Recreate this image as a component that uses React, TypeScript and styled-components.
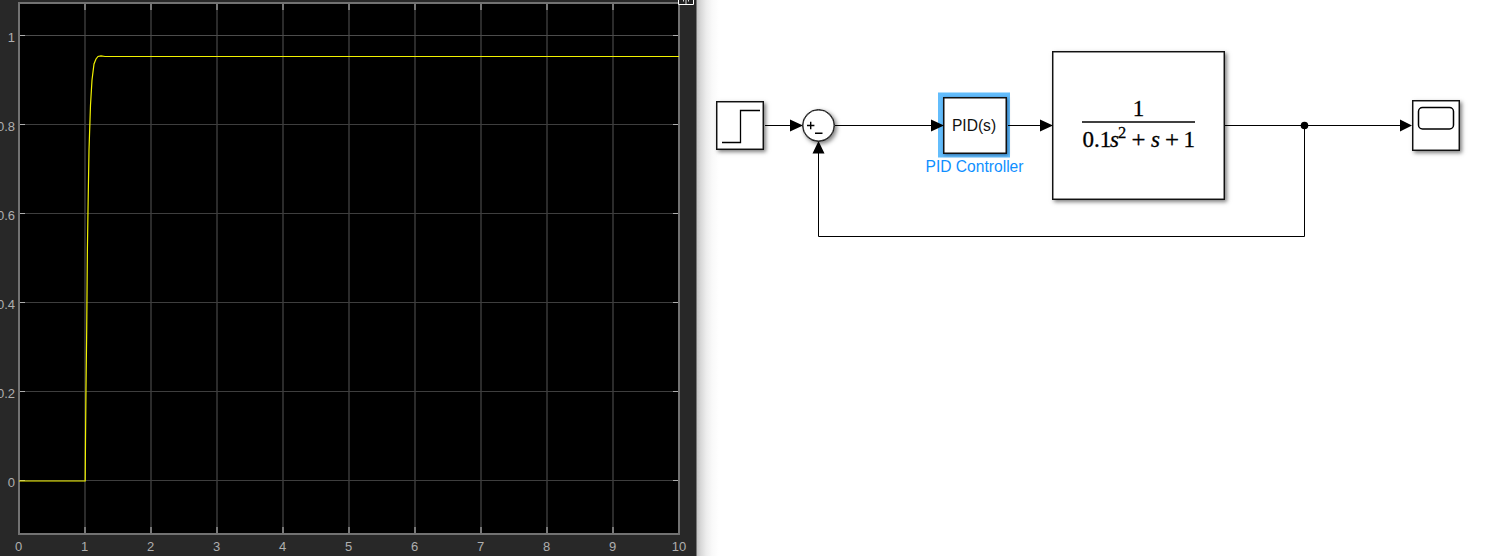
import React from 'react';
import styled, { createGlobalStyle } from 'styled-components';

const GlobalStyle = createGlobalStyle`
  body { margin: 0; background: #fff; }
  * { box-sizing: border-box; }
`;

const Workspace = styled.main`
  display: flex;
  width: 1512px;
  height: 556px;
  overflow: hidden;
  background: #fff;
  font-family: "Liberation Sans", Arial, sans-serif;
`;

const ScopePanel = styled.section`
  flex: none;
  width: 697px;
  height: 556px;
  background: #282828;
  border-right: 1px solid #777;
`;

const Plot = styled.svg`
  display: block;
  width: 696px;
  height: 556px;
`;

const TickLabel = styled.text`
  font: 13px "Liberation Sans", Arial, sans-serif;
  fill: #afafaf;
`;

const Canvas = styled.section`
  position: relative;
  flex: 1;
  background: linear-gradient(to right, #c4c4c4 0, #d9d9d9 4px, #ececec 9px, #f9f9f9 15px, #fff 22px);
`;

const Wires = styled.svg`
  position: absolute;
  inset: 0;
  width: 815px;
  height: 556px;
`;

interface NodeProps {
  $x: number;
  $y: number;
  $w: number;
  $h: number;
  $round?: boolean;
  $selected?: boolean;
}

const Block = styled.div<NodeProps>`
  position: absolute;
  left: ${p => p.$x}px;
  top: ${p => p.$y}px;
  width: ${p => p.$w}px;
  height: ${p => p.$h}px;
  display: flex;
  align-items: center;
  justify-content: center;
  background: #fff;
  border: 1px solid #111;
  border-radius: ${p => (p.$round ? '50%' : '0')};
  box-shadow: ${p =>
    p.$selected
      ? 'inset 0 0 0 .5px #111, 1px 1px 3px rgba(0,40,90,.55), -1px -.5px 0 4px #63bdfc'
      : 'inset 0 0 0 .5px #222, 2px 2px 4px rgba(0,0,0,.5)'};
`;

const Glyph = styled.svg`
  display: block;
  flex: none;
`;

const PidText = styled.span`
  position: relative;
  left: -1px;
  font-size: 15.6px;
  line-height: 18px;
  color: #111;
`;

const Caption = styled.div`
  position: absolute;
  left: 218px;
  top: 158px;
  width: 119px;
  text-align: center;
  font-size: 15.6px;
  line-height: 18px;
  color: #0f8fff;
`;

const MathText = styled.text<{ $italic?: boolean; $size?: number }>`
  font-family: "Liberation Serif", "Times New Roman", serif;
  font-size: ${p => p.$size ?? 23}px;
  font-style: ${p => (p.$italic ? 'italic' : 'normal')};
  fill: #000;
  stroke: #000;
  stroke-width: 0.3px;
`;

const xTicks = [0, 1, 2, 3, 4, 5, 6, 7, 8, 9, 10];
const yTicks = ['1', '0.8', '0.6', '0.4', '0.2', '0'];
const xAt = (i: number) => 19 + i * 66;
const yAt = (i: number) => 35.5 + i * 89;

function Scope() {
  return (
    <ScopePanel>
      <Plot viewBox="0 0 696 556">
        <rect x="19" y="3" width="660" height="531" fill="#000" />
        {xTicks.slice(1, 10).map(i => (
          <g key={i}>
            <path d={`M${xAt(i)} 4V533`} stroke="#2b2b2b" strokeWidth="2" />
            <path d={`M${xAt(i)} 3V10M${xAt(i)} 527V534`} stroke="#777" strokeWidth="2" />
          </g>
        ))}
        {yTicks.map((t, i) => (
          <g key={t}>
            <path d={`M20 ${yAt(i)}H678`} stroke={i === 0 ? '#4c4c4c' : '#3e3e3e'} />
            <path d={`M19 ${yAt(i)}H25M673 ${yAt(i)}H679`} stroke="#afafaf" />
            <TickLabel x="15" y={yAt(i) + 6} textAnchor="end">{t}</TickLabel>
          </g>
        ))}
        <rect x="19" y="3" width="660" height="531" fill="none" stroke="#727272" strokeWidth="2" />
        <path
          d="M19 481H85.2L85.5 440L86 388L86.7 330L87.4 250L88 210L89 150L90.5 105L92 80L94 64L96 59L98 56.5L101 55.8L105 56.5H679"
          fill="none"
          stroke="#f2f200"
          strokeWidth="1.2"
        />
        {xTicks.map(i => (
          <TickLabel key={i} x={xAt(i) - (i === 10 ? 0 : 0.5)} y="551" textAnchor="middle">{i}</TickLabel>
        ))}
        <path d="M678.5 0V4.5H693.5V0" fill="#222" stroke="#fff" />
        <path d="M683.5 0V1.5M686 0V4M688.5 0V1.5" fill="none" stroke="#ddd" />
      </Plot>
    </ScopePanel>
  );
}

function Diagram() {
  return (
    <Canvas>
      <Block $x={19} $y={101} $w={48} $h={49}>
        <Glyph width="46" height="47" viewBox="0 0 46 47">
          <path d="M5 40.5H23.5V8.5H43" fill="none" stroke="#000" strokeWidth="1.3" />
        </Glyph>
      </Block>
      <Block $x={105} $y={109} $w={33} $h={33} $round>
        <Glyph width="31" height="31" viewBox="0 0 31 31">
          <path d="M4 15.5H11.4M7.7 11.8V19.2M12 23.3H19.5" fill="none" stroke="#000" strokeWidth="1.4" />
        </Glyph>
      </Block>
      <Block $x={246} $y={97} $w={64} $h={57} $selected>
        <PidText>PID(s)</PidText>
      </Block>
      <Caption>PID Controller</Caption>
      <Block $x={355} $y={51} $w={173} $h={149}>
        <Glyph width="171" height="147" viewBox="1053 52 171 147">
          <MathText x="1138.5" y="115.5" textAnchor="middle">1</MathText>
          <path d="M1082 122H1195" stroke="#000" strokeWidth="1.5" />
          <MathText x="1082.5" y="146.5">0.1</MathText>
          <MathText x="1110" y="146.5" $italic>s</MathText>
          <MathText x="1118" y="137.5" $size={16.5}>2</MathText>
          <MathText x="1131.5" y="146.5" textLength="14" lengthAdjust="spacingAndGlyphs">+</MathText>
          <MathText x="1151" y="146.5" $italic>s</MathText>
          <MathText x="1165" y="146.5" textLength="14" lengthAdjust="spacingAndGlyphs">+</MathText>
          <MathText x="1183.5" y="146.5">1</MathText>
        </Glyph>
      </Block>
      <Block $x={715} $y={100} $w={48} $h={51}>
        <Glyph width="46" height="49" viewBox="0 0 46 49">
          <rect x="5.5" y="6.5" width="35" height="21.5" rx="4" fill="none" stroke="#000" strokeWidth="1.5" />
        </Glyph>
      </Block>
      <Wires viewBox="697 0 815 556">
        <path
          d="M765 125.5H792M835 125.5H932M1008 125.5H1042M1225 125.5H1401M1304.5 125.5V236.5H818.5V152"
          fill="none"
          stroke="#000"
        />
        <path d="M790 119.5V131.5L803 125.5ZM931 119.5V131.5L944 125.5ZM1040 119.5V131.5L1053 125.5ZM1400 119.5V131.5L1412 125.5ZM812.5 153.5H824.5L818.5 141Z" />
        <circle cx="1304.5" cy="125.5" r="3.8" />
      </Wires>
    </Canvas>
  );
}

export default function App() {
  return (
    <>
      <GlobalStyle />
      <Workspace>
        <Scope />
        <Diagram />
      </Workspace>
    </>
  );
}
